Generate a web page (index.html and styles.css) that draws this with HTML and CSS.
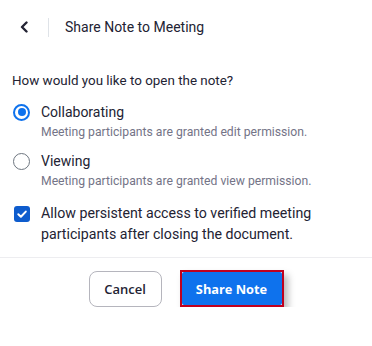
FILE: index.html
```html
<!DOCTYPE html>
<html>
<head>
<meta charset="utf-8">
<link rel="stylesheet" href="styles.css">
</head>
<body>
<div class="panel">
  <div class="header">
    <span class="back">
      <svg width="10" height="12" viewBox="0 0 10 12"><path d="M7.5 1.5 L3 6 L7.5 10.5" fill="none" stroke="#232333" stroke-width="2.4" stroke-linecap="round" stroke-linejoin="round"/></svg>
    </span>
    <span class="vdiv"></span>
    <span class="title">Share Note to Meeting</span>
  </div>
  <div class="body">
    <div class="question">How would you like to open the note?</div>
    <div class="option">
      <div class="row"><span class="radio on"></span><span class="label">Collaborating</span></div>
      <div class="desc">Meeting participants are granted edit permission.</div>
    </div>
    <div class="option">
      <div class="row"><span class="radio"></span><span class="label">Viewing</span></div>
      <div class="desc">Meeting participants are granted view permission.</div>
    </div>
    <div class="check-row">
      <span class="checkbox">
        <svg width="16" height="16" viewBox="0 0 16 16"><path d="M4.3 8.3 L6.9 10.8 L11.8 5.6" fill="none" stroke="#fff" stroke-width="2" stroke-linecap="round" stroke-linejoin="round"/></svg>
      </span>
      <span class="check-label">Allow persistent access to verified meeting participants after closing the document.</span>
    </div>
  </div>
  <div class="footer">
    <button class="btn cancel">Cancel</button>
    <span class="focus-ring"><button class="btn primary">Share Note</button></span>
  </div>
</div>
</body>
</html>
```
FILE: styles.css
```css
html, body {
  margin: 0;
  padding: 0;
  background: #fff;
}
.panel {
  width: 372px;
  font-family: Roboto, "Noto Sans", sans-serif;
  color: #232333;
}
.header {
  height: 54px;
  display: flex;
  align-items: center;
  padding: 0 12px;
}
.back {
  width: 24px;
  height: 24px;
  display: flex;
  align-items: center;
  justify-content: center;
}
.vdiv {
  width: 1px;
  height: 19px;
  background: #dfe3e8;
  margin-left: 12px;
}
.title {
  margin-left: 16px;
  font-size: 14px;
  line-height: 20px;
  color: #232333;
}
.body {
  padding: 17px 12px 12px;
  border-bottom: 1px solid #ededf0;
}
.question {
  font-size: 13.4px;
  line-height: 20px;
  color: #232333;
}
.option {
  margin-top: 11px;
}
.row {
  display: flex;
  align-items: center;
}
.radio {
  box-sizing: border-box;
  width: 17px;
  height: 17px;
  border-radius: 50%;
  border: 1.5px solid #6e7680;
  margin-left: 1px;
  position: relative;
}
.radio.on {
  border: 2px solid #0e72ed;
}
.radio.on::after {
  content: "";
  position: absolute;
  left: 2.5px;
  top: 2.5px;
  width: 8px;
  height: 8px;
  border-radius: 50%;
  background: #0e72ed;
}
.label {
  margin-left: 11px;
  font-size: 14px;
  line-height: 20px;
}
.desc {
  margin-top: 2px;
  margin-left: 29px;
  font-size: 12.2px;
  line-height: 16px;
  color: #747487;
}
.check-row {
  margin-top: 14px;
  display: flex;
  align-items: flex-start;
}
.checkbox {
  width: 16px;
  height: 16px;
  border-radius: 3px;
  background: #0e5ccd;
  margin-left: 2px;
  margin-top: 3px;
  flex-shrink: 0;
  display: flex;
}
.check-label {
  margin-left: 11px;
  font-size: 14.2px;
  line-height: 21px;
  color: #232333;
}
.footer {
  display: flex;
  justify-content: center;
  align-items: center;
  gap: 18px;
  padding-top: 12px;
}
.btn {
  font-family: "Open Sans", "Liberation Sans", sans-serif;
  font-size: 13px;
  cursor: pointer;
}
.cancel {
  width: 73px;
  height: 36px;
  border: 1px solid #b5b5bd;
  border-radius: 8px;
  background: #fff;
  color: #232333;
  font-weight: 600;
}
.focus-ring {
  display: block;
  border: 2px solid #c0001e;
  box-shadow: 4px 5px 7px rgba(0, 0, 0, 0.28);
  background: #fff;
  line-height: 0;
}
.primary {
  width: 100px;
  height: 33px;
  border: none;
  border-radius: 2px;
  background: #0e72ed;
  color: #fff;
  font-weight: 700;
  font-size: 12.8px;
}
```
